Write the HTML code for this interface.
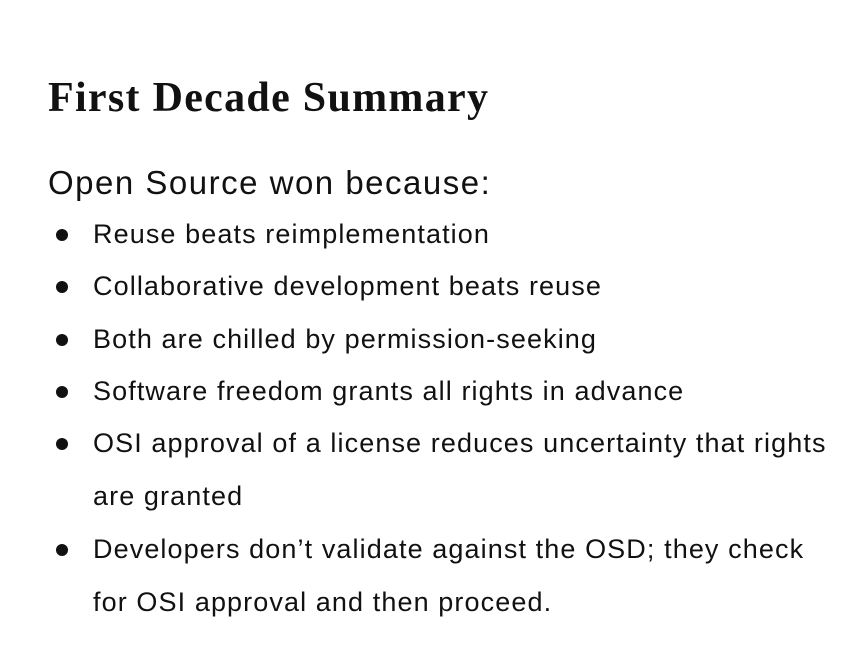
<!DOCTYPE html>
<html><head><meta charset="utf-8"><style>
html,body{margin:0;padding:0;background:#fff;width:868px;height:650px;overflow:hidden;position:relative}
.h{position:absolute;left:48px;top:74px;font-family:"Liberation Serif",serif;font-weight:bold;font-size:42px;letter-spacing:1.3px;color:#111;white-space:nowrap}
.s{position:absolute;left:48px;top:164px;font-family:"Liberation Sans",sans-serif;font-size:33px;letter-spacing:1.5px;color:#111;white-space:nowrap}
.l{position:absolute;left:93px;font-family:"Liberation Sans",sans-serif;font-size:27px;letter-spacing:1.1px;color:#111;white-space:nowrap;line-height:30px}
.b{position:absolute;left:56px;width:12px;height:12px;border-radius:50%;background:#111}
</style></head><body>
<div class="h">First Decade Summary</div>
<div class="s">Open Source won because:</div>
<div class="b" style="top:229px"></div><div class="l" style="top:219px">Reuse beats reimplementation</div>
<div class="b" style="top:281px"></div><div class="l" style="top:271px">Collaborative development beats reuse</div>
<div class="b" style="top:334px"></div><div class="l" style="top:324px">Both are chilled by permission-seeking</div>
<div class="b" style="top:386px"></div><div class="l" style="top:376px">Software freedom grants all rights in advance</div>
<div class="b" style="top:438px"></div><div class="l" style="top:428px">OSI approval of a license reduces uncertainty that rights</div>
<div class="l" style="top:481px">are granted</div>
<div class="b" style="top:544px"></div><div class="l" style="top:534px">Developers don’t validate against the OSD; they check</div>
<div class="l" style="top:587px">for OSI approval and then proceed.</div>
</body></html>
